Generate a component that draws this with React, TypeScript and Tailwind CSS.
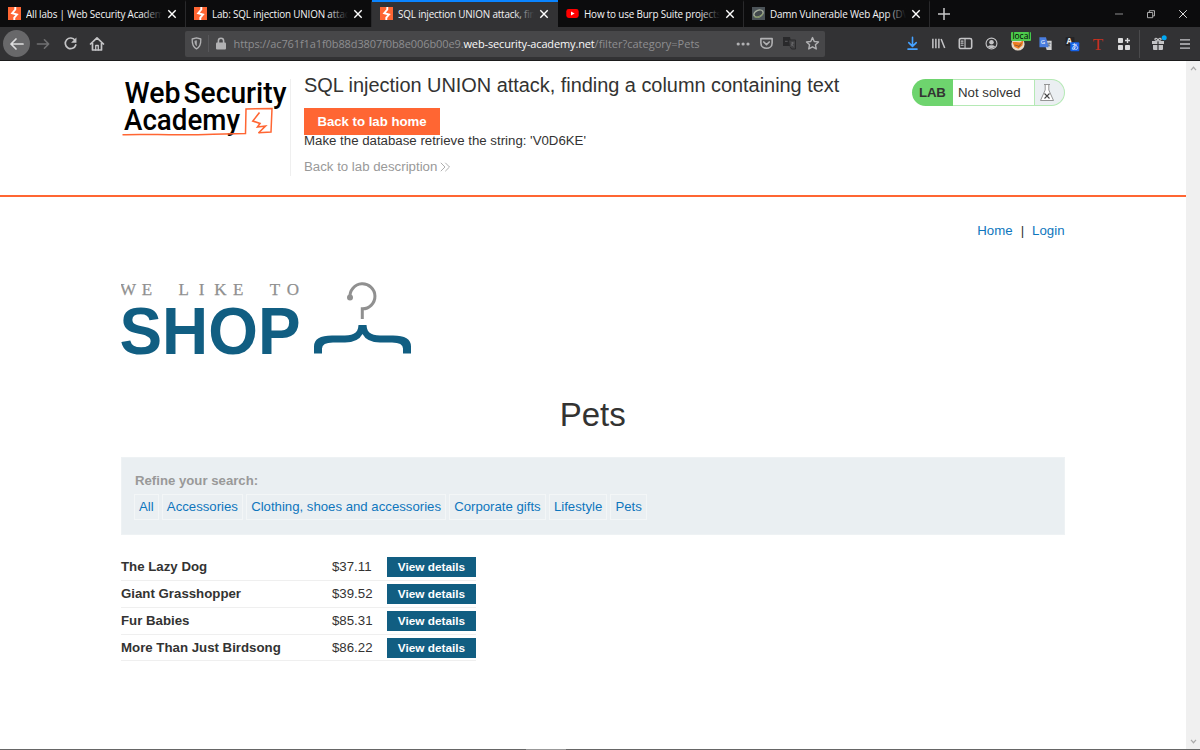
import type { ReactNode } from "react";

const tabs = [
  { title: "All labs | Web Security Academy", icon: "burp" },
  { title: "Lab: SQL injection UNION attack", icon: "burp" },
  { title: "SQL injection UNION attack, find", icon: "burp", active: true },
  { title: "How to use Burp Suite projects", icon: "youtube" },
  { title: "Damn Vulnerable Web App (DVW", icon: "dvwa" },
];

const filters = [
  "All",
  "Accessories",
  "Clothing, shoes and accessories",
  "Corporate gifts",
  "Lifestyle",
  "Pets",
];

const products = [
  { name: "The Lazy Dog", price: "$37.11" },
  { name: "Giant Grasshopper", price: "$39.52" },
  { name: "Fur Babies", price: "$85.31" },
  { name: "More Than Just Birdsong", price: "$86.22" },
];

function Icon({ children, className = "" }: { children: ReactNode; className?: string }) {
  return (
    <svg
      viewBox="0 0 16 16"
      className={`w-4 h-4 shrink-0 ${className}`}
      fill="none"
      stroke="currentColor"
      strokeWidth="1.7"
      strokeLinecap="round"
      strokeLinejoin="round"
    >
      {children}
    </svg>
  );
}

function Favicon({ icon }: { icon: string }) {
  if (icon === "youtube") {
    return (
      <svg viewBox="0 0 13 13" className="w-[13px] h-[13px] shrink-0">
        <rect x="0.3" y="2" width="12.4" height="9" rx="2.4" fill="#f00" />
        <path d="M5 4.5 8.6 6.5 5 8.5Z" fill="#fff" />
      </svg>
    );
  }
  if (icon === "dvwa") {
    return (
      <svg viewBox="0 0 13 13" className="w-[13px] h-[13px] shrink-0">
        <rect width="13" height="13" fill="#4b5358" />
        <ellipse cx="6.5" cy="6.6" rx="4.8" ry="3.2" transform="rotate(-25 6.5 6.6)" fill="#41484b" stroke="#a9b1a0" strokeWidth="1.4" />
        <path d="M2.3 9.5C5 11.3 9.5 9.5 10.8 6.5" stroke="#78914c" fill="none" />
      </svg>
    );
  }
  return (
    <svg viewBox="0 0 13 13" className="w-[13px] h-[13px] shrink-0">
      <rect width="13" height="13" fill="#ff6633" />
      <path d="M7.3 0V2.5L4.2 6.2 9 7.5 6.3 10.6V13" fill="none" stroke="#fff" strokeWidth="1.9" />
    </svg>
  );
}

function TabStrip() {
  return (
    <div className="flex h-[27px] bg-[#0c0c0d] text-[#f4f4f5]">
      {tabs.map((tab) => (
        <div
          key={tab.title}
          className={`flex items-center w-[186px] pl-2 pb-[2px] border-t-2 ${
            tab.active ? "bg-[#323234] border-[#0a84ff]" : "border-transparent border-r border-r-[#29292b]"
          }`}
        >
          <Favicon icon={tab.icon} />
          <div className="relative ml-[5px] w-[136px] overflow-hidden whitespace-nowrap text-[9.9px] leading-4 tracking-[-0.17px]">
            {tab.title}
            <div
              className={`absolute inset-y-0 right-0 w-5 bg-gradient-to-r from-transparent ${
                tab.active ? "to-[#323234]" : "to-[#0c0c0d]"
              }`}
            />
          </div>
          <svg viewBox="0 0 10 10" className="w-[10px] h-[10px] ml-[4.5px] shrink-0">
            <path d="m1.3 1.3 7.4 7.4M8.7 1.3 1.3 8.7" stroke="#fff" strokeWidth="1.4" />
          </svg>
        </div>
      ))}
      <svg viewBox="0 0 14 14" className="w-[14px] h-[14px] mt-[7px] ml-[7px]">
        <path d="M7 1v12M1 7h12" stroke="#c8c8c9" strokeWidth="1.5" />
      </svg>
      <div className="flex items-center gap-[22px] ml-auto mr-[12px] text-[#d7d7db]">
        <svg viewBox="0 0 10 10" className="w-[10px] h-[10px]">
          <path d="M1 5h8" stroke="#8c8c8e" />
        </svg>
        <svg viewBox="0 0 10 10" className="w-[10px] h-[10px]" fill="none" stroke="#bbb">
          <path d="M1.5 3.5h5.2v5.2H1.5ZM3.3 3.5V1.7h5.2v5.2H6.7" strokeWidth="0.9" />
        </svg>
        <svg viewBox="0 0 10 10" className="w-[10px] h-[10px]">
          <path d="m1.2 1.2 7.6 7.6M8.8 1.2 1.2 8.8" stroke="#ddd" />
        </svg>
      </div>
    </div>
  );
}

function AddressBar() {
  return (
    <div className="flex items-center w-[640px] h-[26px] ml-[80px] pl-1 pr-[4px] rounded-[2px] bg-[#474749] text-[#b1b1b3]">
      <Icon className="!w-[15px] !h-[15px]">
        <path d="M8 2 12.6 3.2C12.8 8.5 11.4 12 8 13.8 4.6 12 3.2 8.5 3.4 3.2Z" strokeWidth="1.4" />
        <path d="M8 5.2V10.4C6.8 9.3 6.3 8 6.2 5.7Z" fill="currentColor" strokeWidth="0.6" />
      </Icon>
      <div className="w-px h-[17px] ml-[4px] bg-[#57575a]" />
      <svg viewBox="0 0 12 13" className="w-[12px] h-[13px] ml-[6px]">
        <rect x="1" y="5.5" width="10" height="7" rx="1" fill="currentColor" />
        <path d="M3.4 6V3.8a2.6 2.6 0 0 1 5.2 0V6" fill="none" stroke="currentColor" strokeWidth="1.6" />
      </svg>
      <div className="w-[501px] ml-[6.5px] pt-[2px] whitespace-nowrap text-[11px] text-[#8e8e90]">
        <span className="tracking-[-0.1px]">https://ac761f1a1f0b88d3807f0b8e006b00e9.</span>
        <span className="tracking-[-0.14px] text-[#f9f9fa]">web-security-academy.net</span>
        <span>/filter?category=Pets</span>
      </div>
      <Icon>
        <g fill="currentColor" stroke="none">
          <circle cx="3.2" cy="8" r="1.6" />
          <circle cx="8.1" cy="8" r="1.6" />
          <circle cx="13" cy="8" r="1.6" />
        </g>
      </Icon>
      <Icon className="ml-[8px] !w-[15px] !h-[15px]">
        <path d="M2 2.8h12v4.6c0 7.6-12 7.6-12 0Z" />
        <path d="m5.1 6.4 2.9 2.7 2.9-2.7" strokeWidth="1.8" />
      </Icon>
      <svg viewBox="0 0 15 15" className="w-[15px] h-[15px] ml-[8px]">
        <path d="M1 1h7l2 9H1Z" fill="#29292b" />
        <path d="M7 4h6.5v9H9.6L8 10.5" fill="#414143" stroke="#2b2b2d" />
        <path d="M3 5.3h2.7M9 7h3.3M10.6 6v1c0 1.7-.7 2.6-1.6 3.4M9.3 8c.5 1.1 1.3 1.7 2.5 2.2" fill="none" stroke="#707072" strokeWidth="0.7" />
      </svg>
      <Icon className="ml-[8px] !w-[15px] !h-[15px]">
        <path d="m8 1.7 1.9 4.1 4.5.5-3.3 3 .9 4.5L8 11.5l-4 2.3.9-4.5-3.3-3 4.5-.5Z" strokeWidth="1.5" />
      </Icon>
    </div>
  );
}

function ToolbarIcons() {
  return (
    <div className="flex items-center ml-auto mr-[9px] text-[#c4c4c6]">
      <div className="flex items-center gap-[11.4px]">
        <Icon className="text-[#45a1ff] !w-[15px] !h-[15px]">
          <path d="M8 1.5v9M4 7l4 4 4-4M3.2 14h9.6" />
        </Icon>
        <Icon className="!w-[15px] !h-[15px]">
          <path d="M2 3v10M5.2 3v10M8.4 3v10M10.8 3.3l3.8 9.6" strokeWidth="1.6" strokeLinecap="butt" />
        </Icon>
        <Icon className="!w-[15px] !h-[15px]">
          <rect x="1.4" y="2.6" width="13.2" height="10.8" rx="1.8" />
          <path d="M7.5 3v10M3.4 5.4h2M3.4 7.6h2M3.4 9.8h2" strokeWidth="1.2" />
        </Icon>
        <Icon className="!w-[15px] !h-[15px]">
          <circle cx="8" cy="8" r="5.8" strokeWidth="1.2" />
          <circle cx="8" cy="6.6" r="2.4" fill="currentColor" stroke="none" />
          <path d="M4.2 11.3c1-2 6.6-2 7.6 0-2 2.2-5.6 2.2-7.6 0Z" fill="currentColor" stroke="none" />
        </Icon>
        <div className="relative flex">
          <svg viewBox="0 0 16 16" className="w-[16px] h-[16px]">
            <circle cx="8" cy="8" r="6.6" fill="#e8d9c7" />
            <path d="M2.5 6 4.5 11 8.4 12.7 12.4 9.4 13.5 4 10 6.5 6 6Z" fill="#ef7d22" />
            <path d="m4.5 9 4 1 3-2.5M8 11l2.5-1.5" fill="none" stroke="#7d5130" strokeWidth="0.8" />
          </svg>
          <span className="absolute left-[1px] -top-[4px] h-[9px] w-[20px] rounded-[1px] bg-[#4cc94c] text-center text-[8.4px] leading-[8px] font-medium text-black">
            local
          </span>
        </div>
        <svg viewBox="0 0 16 16" className="w-[15px] h-[15px]">
          <path d="M6 5h8.5v10H9.3Z" fill="#d2d2d2" />
          <path d="M1.5 1.2h7L11.5 12h-10Z" fill="#4a7ee0" />
          <text x="3" y="9" fontSize="6.5" fill="#fff">G</text>
          <path d="M10 7.8h3.5M12 7v1c0 1-.8 2.3-1.5 3M11 9c.4.9 1 1.5 2 2" stroke="#57677c" strokeWidth="0.8" fill="none" />
        </svg>
        <svg viewBox="0 0 16 16" className="w-[16px] h-[16px]">
          <rect x="1.5" y="1" width="9" height="9" rx="1" fill="#242426" />
          <text x="2.5" y="8" fontSize="8" fontWeight="bold" fill="#eee">A</text>
          <rect x="6.3" y="6.2" width="9" height="9" rx="1" fill="#1461e8" />
          <text x="7.2" y="13.4" fontSize="7.2" fill="#fff" className="font-['Noto_Sans_CJK_JP',sans-serif]">あ</text>
        </svg>
        <svg viewBox="0 0 14 16" className="w-[14px] h-[16px]">
          <text x="6" y="13.5" textAnchor="middle" fontSize="17" fill="#c8301f" className="font-['Liberation_Serif',serif]">
            T
          </text>
        </svg>
        <svg viewBox="0 0 14 14" className="w-[14px] h-[14px]" fill="#dcdcdd">
          <rect x="1" y="1" width="5" height="5" rx=".8" />
          <rect x="1" y="8" width="5" height="5" rx=".8" />
          <rect x="8" y="8" width="5" height="5" rx=".8" />
          <path d="M10.5 1v5M8 3.5h5" stroke="#dcdcdd" strokeWidth="1.4" />
        </svg>
      </div>
      <div className="w-px h-7 ml-[8px] bg-[#4a4a4c]" />
      <svg viewBox="0 0 17 17" className="w-[17px] h-[17px] ml-[10px]" fill="#c4c4c6">
        <path d="M2 6h5.4v3H2ZM8.6 6H14v3H8.6ZM3 10h4.4v5H4a1 1 0 0 1-1-1ZM8.6 10H13v4a1 1 0 0 1-1 1H8.6Z" />
        <path d="M8 5.8C5.8 5.8 4.5 4.7 5 3.7 5.8 2.4 7.8 4 8 5.8ZM8 5.8C10.2 5.8 11.5 4.7 11 3.7 10.2 2.4 8.2 4 8 5.8Z" fill="none" stroke="#c4c4c6" strokeWidth="1.2" />
        <circle cx="14.2" cy="2.8" r="2.5" fill="#00a8f3" />
      </svg>
      <svg viewBox="0 0 12 12" className="w-3 h-3 ml-[12px]">
        <path d="M1 1.8h10M1 6h10M1 10.2h10" stroke="#c4c4c6" strokeWidth="1.3" />
      </svg>
    </div>
  );
}

function NavBar() {
  return (
    <div className="flex items-center h-[34px] bg-[#323234] border-b border-[#0c0c0d]/60 text-[#c4c4c6]">
      <div className="flex items-center justify-center w-[27px] h-[27px] ml-[3px] rounded-full bg-[#68686a]">
        <Icon className="text-[#dededf]">
          <path d="M14 8H2M7 3 2 8l5 5" />
        </Icon>
      </div>
      <Icon className="ml-[6px] !w-[15px] text-[#707072]">
        <path d="M1.5 8h12M9 3.5 13.5 8 9 12.5" />
      </Icon>
      <Icon className="ml-[12px] !w-[15px] !h-[15px]">
        <path d="M12.8 4.5A5.7 5.7 0 1 0 13.6 9.5" strokeWidth="1.8" />
        <path d="M14.3 1.5v5.7H8.6Z" fill="currentColor" stroke="none" />
      </Icon>
      <Icon className="ml-[11px]">
        <path d="M1.5 8 8 1.8 14.5 8M3.5 7v7h9V7" />
        <path d="M6.7 14V9.5h2.6V14" strokeWidth="1.3" />
      </Icon>
      <AddressBar />
      <ToolbarIcons />
    </div>
  );
}

function AcademyLogo() {
  return (
    <svg viewBox="0 0 169 60" className="w-[169px] h-[60px]">
      <g className="font-[Roboto,sans-serif]" fontWeight="500" fill="#000">
        <text x="2.5" y="24" fontSize="30" textLength="56" lengthAdjust="spacingAndGlyphs">Web</text>
        <text x="61.5" y="24" fontSize="30" textLength="103" lengthAdjust="spacingAndGlyphs">Security</text>
        <text x="2" y="50.5" fontSize="29.5" textLength="116" lengthAdjust="spacingAndGlyphs">Academy</text>
      </g>
      <g fill="none" stroke="#ff6633">
        <path d="M.5 55.8C24 54.5 51 57 91 55.2L123.500 54.5 124 30 150 29.5 149 53 136.5 53.8" strokeWidth="1.5" />
        <path d="M137.5 33.5 130.8 42 138 44.5 135.5 48 143.5 47 136.5 54" strokeWidth="1.6" />
      </g>
    </svg>
  );
}

function LabStatus() {
  return (
    <div className="flex w-[153px] h-[27px] text-[13.25px] leading-[25px]">
      <p className="w-[41px] pl-[7px] pt-px rounded-l-full bg-[#6ed46e] font-bold tracking-[-0.2px]">LAB</p>
      <p className="w-[82px] pl-[5px] border-y border-r border-[#b5e9b5] bg-white">Not solved</p>
      <div className="flex-1 rounded-r-full border border-l-0 border-[#b5e9b5] bg-[#ebeff2]">
        <svg viewBox="0 0 16 20" className="w-[16px] h-[20px] mt-[2.5px] ml-[4px]" fill="white" stroke="#8a8a8a" strokeWidth="0.9">
          <path d="M5 1.5H11M6.2 1.5V7L1.5 17.5H14.5L9.8 7V1.5" />
          <path d="m5.500 10.5 5 5M10.5 10.5l-5 5" stroke="#444" strokeWidth="1.1" />
        </svg>
      </div>
    </div>
  );
}

function LabHeader() {
  return (
    <header className="h-[136px] pt-[18px] pl-[122px] border-b-2 border-[#ff6633]">
      <div className="flex w-[943px]">
        <div className="w-[169px] h-[97px] border-r border-[#efefef]">
          <AcademyLogo />
        </div>
        <div className="pl-[13px]">
          <h2 className="-mt-[7px] text-[19.95px] leading-[26px] tracking-[-0.025px]">
            SQL injection UNION attack, finding a column containing text
          </h2>
          <a className="block w-[136px] h-[27px] mt-[10px] bg-[#ff6633] text-center text-[13.2px] leading-[27px] font-bold text-white">
            Back to lab home
          </a>
          <p className="-mt-[2px] text-[13.25px] leading-4">Make the database retrieve the string: 'V0D6KE'</p>
          <a className="flex items-center mt-[10px] text-[13.25px] leading-4 text-[#999]">
            Back to lab description
            <svg viewBox="0 0 10 10" className="w-[10px] h-[10px] ml-[3px]">
              <path d="m.8.8 4.2 4.2L.8 9.2M5.3.8 9.5 5 5.3 9.2" fill="none" stroke="#999" strokeWidth="0.8" />
            </svg>
          </a>
        </div>
        <div className="ml-auto">
          <LabStatus />
        </div>
      </div>
    </header>
  );
}

function ShopLogo() {
  return (
    <svg viewBox="0 0 292 76" className="w-[292px] h-[76px] mt-[41px]">
      <text
        x="7 26 44 62.7 80.7 99.3 117.3 135 154 172"
        y="14.7"
        fontSize="17"
        textAnchor="middle"
        fill="#909090"
        stroke="#909090"
        strokeWidth="0.25"
        className="font-['Liberation_Serif',serif]"
      >
        WE LIKE TO
      </text>
      <text x="-1.5" y="73.5" fontSize="66" fontWeight="bold" textLength="181" lengthAdjust="spacingAndGlyphs" fill="#115e82">
        SHOP
      </text>
      <circle cx="229" cy="17.5" r="3" fill="#909090" />
      <path d="M229 17.5A12.5 12.5 0 1 1 241.300 28.8V39" fill="none" stroke="#909090" strokeWidth="3" />
      <path
        transform="translate(0 .6)"
        d="M237.5 44.5H245.5C246 54 252 55 263 55H272Q290 55 290 66V73H282V68Q282 62 271 62H259Q246 62 241.5 53.5 237 62 224 62H212Q201 62 201 68V73H193V66Q193 55 211 55H220C231 55 237 54 237.5 44.5Z"
        fill="#115e82"
      />
    </svg>
  );
}

function ShopPage() {
  return (
    <main className="w-[943.5px] ml-[121px]">
      <nav className="flex justify-end gap-2 pt-[26px] text-[13.25px] leading-4">
        <a className="text-[#0e76bd]">Home</a>
        <span>|</span>
        <a className="text-[#0e76bd]">Login</a>
      </nav>
      <ShopLogo />
      <h1 className="mt-[39px] text-center text-[33px] leading-10">Pets</h1>
      <section className="h-[78px] mt-[22px] pt-[15px] pl-[13px] bg-[#eaeff2] border border-[#eef2f4]">
        <h3 className="text-[13.2px] leading-4 font-bold text-[#999]">Refine your search:</h3>
        <div className="flex gap-[3.2px] mt-[5px] -ml-px">
          {filters.map((filter) => (
            <a key={filter} className="h-[26px] px-1 border border-[#f3f6f7] text-[13.2px] leading-6 text-[#0e76bd]">
              {filter}
            </a>
          ))}
        </div>
      </section>
      <section className="w-[355px] mt-[19.3px]">
        {products.map((product) => (
          <div key={product.name} className="flex items-center h-[26.8px] border-b border-[#efefef] text-[13.25px]">
            <h3 className="w-[211px] font-bold">{product.name}</h3>
            <span>{product.price}</span>
            <a className="w-[89px] h-[20px] ml-auto bg-[#115e82] text-center text-[11.8px] leading-5 font-bold text-white">
              View details
            </a>
          </div>
        ))}
      </section>
    </main>
  );
}

export default function App() {
  return (
    <div className="flex flex-col w-[1200px] h-[750px] overflow-hidden bg-white">
      <div className="font-['Open_Sans','Noto_Sans',sans-serif]">
        <TabStrip />
        <NavBar />
      </div>
      <div className="flex h-[688px] font-['Liberation_Sans',Arial,sans-serif] text-[#333332]">
        <div className="w-[1186px]">
          <LabHeader />
          <ShopPage />
        </div>
        <div className="flex flex-col items-center justify-between w-[14px] py-[5px] bg-[#f0f0f0]">
          <svg viewBox="0 0 8 6" className="w-[7px] h-[5px]">
            <path d="m1 5 3-3.5L7 5" fill="none" stroke="#aaa" strokeWidth="1.4" />
          </svg>
          <svg viewBox="0 0 8 6" className="w-[7px] h-[5px]">
            <path d="m1 1 3 3.5L7 1" fill="none" stroke="#aaa" strokeWidth="1.4" />
          </svg>
        </div>
      </div>
      <div className="flex h-px bg-[#666]">
        <div className="w-10 ml-[526px] bg-[#999]" />
      </div>
    </div>
  );
}
